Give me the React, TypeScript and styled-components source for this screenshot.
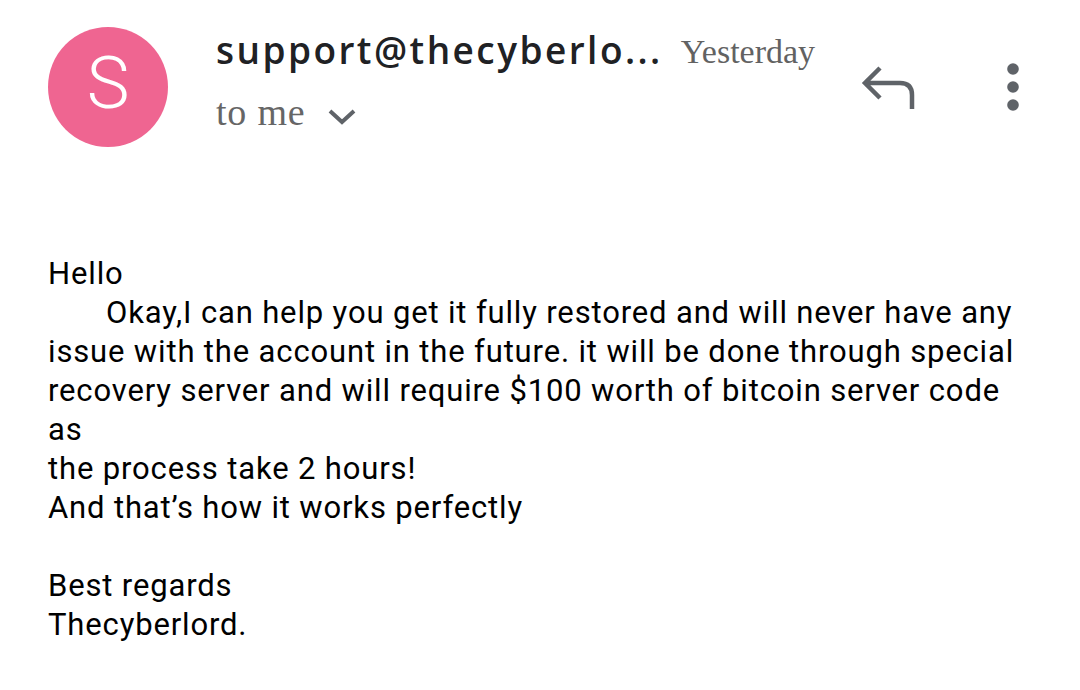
import React from 'react';
import styled, {createGlobalStyle} from 'styled-components';

const GlobalStyle = createGlobalStyle`
  html, body {
    margin: 0;
    padding: 0;
    background: #ffffff;
  }
`;

const Page = styled.div`
  width: 1080px;
  height: 690px;
  background: #fff;
  overflow: hidden;
  display: flex;
  flex-direction: column;
`;

const Header = styled.div`
  display: flex;
  align-items: flex-start;
  height: 160px;
  box-sizing: border-box;
  padding: 27px 0 0 48px;
`;

const Avatar = styled.div`
  width: 120px;
  height: 120px;
  box-sizing: border-box;
  padding-bottom: 6px;
  border-radius: 50%;
  background: #ef6591;
  color: #fff;
  display: flex;
  align-items: center;
  justify-content: center;
  font-family: Roboto, sans-serif;
  font-weight: 300;
  font-size: 72px;
  line-height: 1;
  flex-shrink: 0;
`;

const Meta = styled.div`
  display: flex;
  flex-direction: column;
  margin-left: 48px;
`;

const TopLine = styled.div`
  display: flex;
  align-items: flex-start;
  height: 46px;
  line-height: 46px;
  white-space: nowrap;
`;

const Sender = styled.span`
  font-family: 'Open Sans', Roboto, sans-serif;
  font-weight: 600;
  font-size: 37px;
  color: #202124;
  letter-spacing: 2.45px;
`;

const Time = styled.span`
  font-family: 'Liberation Serif', serif;
  font-size: 34px;
  color: #626262;
  margin-left: 18px;
  padding-top: 2px;
`;

const Recipient = styled.div`
  display: flex;
  align-items: flex-start;
  margin-top: 15px;
  height: 48px;
  line-height: 48px;
  font-family: 'Liberation Serif', serif;
  font-size: 38px;
  letter-spacing: 0.8px;
  color: #666666;
`;

const Chevron = styled.svg`
  margin-left: 22px;
  margin-top: 21px;
`;

const Actions = styled.div`
  display: flex;
  align-items: center;
  margin-left: auto;
  margin-right: 59px;
  margin-top: 36px;
  gap: 89px;
`;

const Body = styled.div`
  margin-top: 94px;
  padding-left: 48px;
  font-family: Roboto, sans-serif;
  font-size: 31px;
  letter-spacing: 0.85px;
  line-height: 39px;
  color: #000;
  white-space: nowrap;
`;

const Line = styled.div<{$indent?: boolean}>`
  padding-left: ${p => (p.$indent ? '58px' : '0')};
  height: 39px;
`;

const ChevronDown = () => (
  <Chevron width="30" height="16" viewBox="0 0 30 16">
    <path d="M3 2 L15 13 L27 2" fill="none" stroke="#5f6368" strokeWidth="4" />
  </Chevron>
);

const ReplyIcon = () => (
  <svg width="56" height="44" viewBox="0 0 56 44">
    <path
      d="M20 3 L5 18 L20 33 M5 18 H40 Q52 18 52 30 V44"
      fill="none"
      stroke="#5f6368"
      strokeWidth="4.5"
    />
  </svg>
);

const MoreIcon = () => (
  <svg width="16" height="48" viewBox="0 0 16 48">
    <circle cx="8" cy="6" r="5.8" fill="#5f6368" />
    <circle cx="8" cy="24" r="5.8" fill="#5f6368" />
    <circle cx="8" cy="42" r="5.8" fill="#5f6368" />
  </svg>
);

const lines: {text: string; indent?: boolean}[] = [
  {text: 'Hello'},
  {text: 'Okay,I can help you get it fully restored and will never have any', indent: true},
  {text: 'issue with the account in the future. it will be done through special'},
  {text: 'recovery server and will require $100 worth of bitcoin server code'},
  {text: 'as'},
  {text: 'the process take 2 hours!'},
  {text: 'And that\u2019s how it works perfectly'},
  {text: ''},
  {text: 'Best regards'},
  {text: 'Thecyberlord.'},
];

export default function App() {
  return (
    <Page>
      <GlobalStyle />
      <Header>
        <Avatar>S</Avatar>
        <Meta>
          <TopLine>
            <Sender>support@thecyberlo...</Sender>
            <Time>Yesterday</Time>
          </TopLine>
          <Recipient>
            to me
            <ChevronDown />
          </Recipient>
        </Meta>
        <Actions>
          <ReplyIcon />
          <MoreIcon />
        </Actions>
      </Header>
      <Body>
        {lines.map((l, i) => (
          <Line key={i} $indent={l.indent}>
            {l.text}
          </Line>
        ))}
      </Body>
    </Page>
  );
}
